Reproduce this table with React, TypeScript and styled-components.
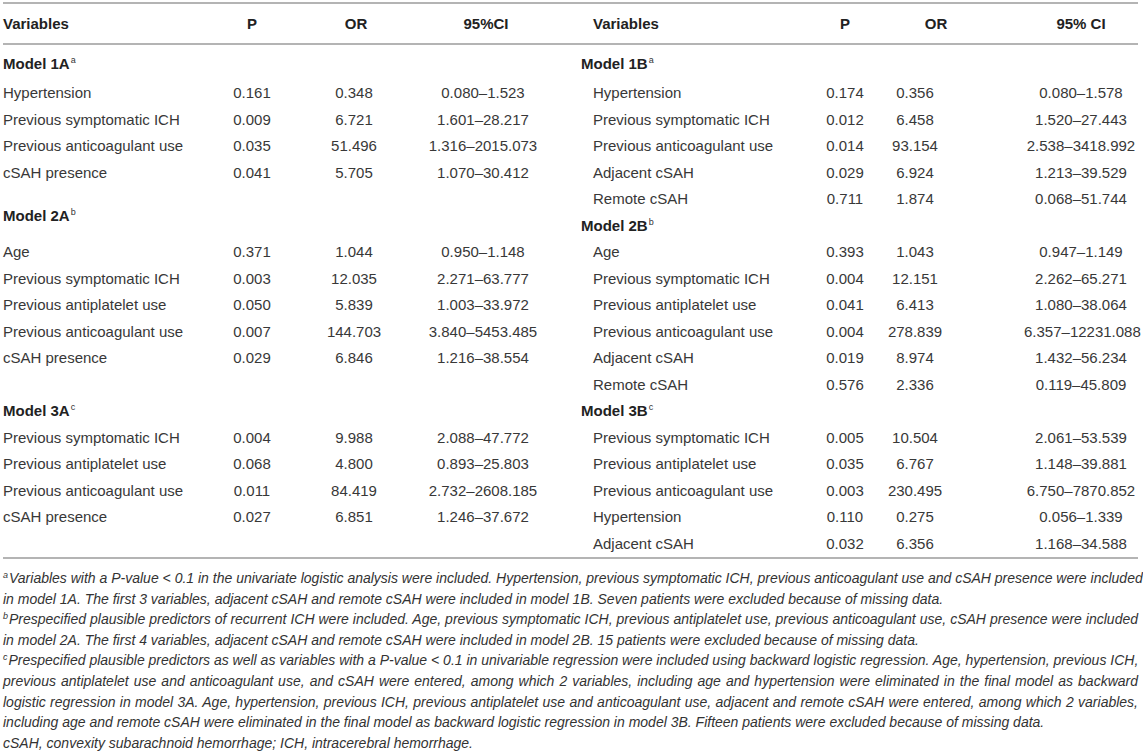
import React from 'react';
import styled, { createGlobalStyle } from 'styled-components';

type Side = 'left' | 'right';

type ModelItem = { kind: 'model'; label: string; sup: string; before?: number; after?: number };
type DataItem = { kind: 'row'; name: string; p: string; or: string; ci: string };
type Item = ModelItem | DataItem;

const COLS: Record<Side, string> = {
  left: '197px 104px 100px 158px',
  right: '248px 70px 144px 114px',
};

const row = (name: string, p: string, or: string, ci: string): DataItem => ({ kind: 'row', name, p, or, ci });

const leftItems: Item[] = [
  { kind: 'model', label: 'Model 1A', sup: 'a', before: 6, after: 2.5 },
  row('Hypertension', '0.161', '0.348', '0.080–1.523'),
  row('Previous symptomatic ICH', '0.009', '6.721', '1.601–28.217'),
  row('Previous anticoagulant use', '0.035', '51.496', '1.316–2015.073'),
  row('cSAH presence', '0.041', '5.705', '1.070–30.412'),
  { kind: 'model', label: 'Model 2A', sup: 'b', before: 16.75, after: 9.75 },
  row('Age', '0.371', '1.044', '0.950–1.148'),
  row('Previous symptomatic ICH', '0.003', '12.035', '2.271–63.777'),
  row('Previous antiplatelet use', '0.050', '5.839', '1.003–33.972'),
  row('Previous anticoagulant use', '0.007', '144.703', '3.840–5453.485'),
  row('cSAH presence', '0.029', '6.846', '1.216–38.554'),
  { kind: 'model', label: 'Model 3A', sup: 'c', before: 26.5 },
  row('Previous symptomatic ICH', '0.004', '9.988', '2.088–47.772'),
  row('Previous antiplatelet use', '0.068', '4.800', '0.893–25.803'),
  row('Previous anticoagulant use', '0.011', '84.419', '2.732–2608.185'),
  row('cSAH presence', '0.027', '6.851', '1.246–37.672'),
];

const rightItems: Item[] = [
  { kind: 'model', label: 'Model 1B', sup: 'a', before: 6, after: 2.5 },
  row('Hypertension', '0.174', '0.356', '0.080–1.578'),
  row('Previous symptomatic ICH', '0.012', '6.458', '1.520–27.443'),
  row('Previous anticoagulant use', '0.014', '93.154', '2.538–3418.992'),
  row('Adjacent cSAH', '0.029', '6.924', '1.213–39.529'),
  row('Remote cSAH', '0.711', '1.874', '0.068–51.744'),
  { kind: 'model', label: 'Model 2B', sup: 'b' },
  row('Age', '0.393', '1.043', '0.947–1.149'),
  row('Previous symptomatic ICH', '0.004', '12.151', '2.262–65.271'),
  row('Previous antiplatelet use', '0.041', '6.413', '1.080–38.064'),
  row('Previous anticoagulant use', '0.004', '278.839', '6.357–12231.088'),
  row('Adjacent cSAH', '0.019', '8.974', '1.432–56.234'),
  row('Remote cSAH', '0.576', '2.336', '0.119–45.809'),
  { kind: 'model', label: 'Model 3B', sup: 'c' },
  row('Previous symptomatic ICH', '0.005', '10.504', '2.061–53.539'),
  row('Previous antiplatelet use', '0.035', '6.767', '1.148–39.881'),
  row('Previous anticoagulant use', '0.003', '230.495', '6.750–7870.852'),
  row('Hypertension', '0.110', '0.275', '0.056–1.339'),
  row('Adjacent cSAH', '0.032', '6.356', '1.168–34.588'),
];

const App: React.FC = () => {
  const renderHalf = (side: Side, items: Item[]) => (
    <Half>
      {items.map((it, i) =>
        it.kind === 'model' ? (
          <ModelRow key={i} $side={side} $before={it.before ?? 0} $after={it.after ?? 0}>
            {it.label}
            <Sup>{it.sup}</Sup>
          </ModelRow>
        ) : (
          <Row key={i} $side={side}>
            <NameCell $indent={side === 'right' ? 31 : 0}>{it.name}</NameCell>
            <NumCell>{it.p}</NumCell>
            <NumCell $padR={side === 'right' ? 74 : 0}>{it.or}</NumCell>
            <NumCell>{it.ci}</NumCell>
          </Row>
        ),
      )}
    </Half>
  );

  return (
    <Page>
      <GlobalStyle />
      <Table>
        <Header>
          <HeadRow $side="left">
            <NameCell $indent={0}>Variables</NameCell>
            <NumCell>P</NumCell>
            <NumCell $padL={4}>OR</NumCell>
            <NumCell $padL={6}>95%CI</NumCell>
          </HeadRow>
          <HeadRow $side="right">
            <NameCell $indent={31}>Variables</NameCell>
            <NumCell>P</NumCell>
            <NumCell $padR={32}>OR</NumCell>
            <NumCell>95% CI</NumCell>
          </HeadRow>
        </Header>
        <Body>
          {renderHalf('left', leftItems)}
          {renderHalf('right', rightItems)}
        </Body>
      </Table>
      <Notes>
        <Line $full>
          <NoteMark>a</NoteMark>Variables with a P-value &lt; 0.1 in the univariate logistic analysis were included. Hypertension, previous symptomatic ICH, previous anticoagulant use and cSAH presence were included
        </Line>
        <Line>in model 1A. The first 3 variables, adjacent cSAH and remote cSAH were included in model 1B. Seven patients were excluded because of missing data.</Line>
        <Line $full>
          <NoteMark>b</NoteMark>Prespecified plausible predictors of recurrent ICH were included. Age, previous symptomatic ICH, previous antiplatelet use, previous anticoagulant use, cSAH presence were included
        </Line>
        <Line>in model 2A. The first 4 variables, adjacent cSAH and remote cSAH were included in model 2B. 15 patients were excluded because of missing data.</Line>
        <Line $full>
          <NoteMark>c</NoteMark>Prespecified plausible predictors as well as variables with a P-value &lt; 0.1 in univariable regression were included using backward logistic regression. Age, hypertension, previous ICH,
        </Line>
        <Line $full>previous antiplatelet use and anticoagulant use, and cSAH were entered, among which 2 variables, including age and hypertension were eliminated in the final model as backward</Line>
        <Line $full>logistic regression in model 3A. Age, hypertension, previous ICH, previous antiplatelet use and anticoagulant use, adjacent and remote cSAH were entered, among which 2 variables,</Line>
        <Line>including age and remote cSAH were eliminated in the final model as backward logistic regression in model 3B. Fifteen patients were excluded because of missing data.</Line>
        <Line>cSAH, convexity subarachnoid hemorrhage; ICH, intracerebral hemorrhage.</Line>
      </Notes>
    </Page>
  );
};

const GlobalStyle = createGlobalStyle`
  html, body {
    margin: 0;
    padding: 0;
    background: #ffffff;
  }
  body {
    font-family: 'Liberation Sans', Arial, Helvetica, sans-serif;
    color: #383838;
  }
`;

const Page = styled.div`
  width: 1135px;
  padding: 2px 5px 0 3px;
`;

const Table = styled.div`
  border-top: 2px solid #b4b4b4;
  border-bottom: 2px solid #b4b4b4;
`;

const Header = styled.div`
  display: flex;
  height: 39px;
  align-items: center;
  border-bottom: 2px solid #b4b4b4;
  font-weight: bold;
  color: #222;
`;

const Body = styled.div`
  display: flex;
  align-items: flex-start;
  padding-bottom: 0;
`;

const Half = styled.div`
  display: flex;
  flex-direction: column;
`;

const Row = styled.div<{ $side: Side }>`
  display: grid;
  grid-template-columns: ${p => COLS[p.$side]};
  height: 26.5px;
  line-height: 26.5px;
  font-size: 15px;
  white-space: nowrap;
`;

const HeadRow = styled(Row)`
  line-height: 20px;
  height: 20px;
`;

const ModelRow = styled.div<{ $side: Side; $before: number; $after: number }>`
  height: 26.5px;
  line-height: 26.5px;
  margin-top: ${p => p.$before}px;
  margin-bottom: ${p => p.$after}px;
  padding-left: ${p => (p.$side === 'right' ? 19 : 0)}px;
  font-size: 15px;
  font-weight: bold;
  color: #222;
  white-space: nowrap;
`;

const Sup = styled.sup`
  font-size: 9px;
  font-weight: normal;
  vertical-align: 6px;
  line-height: 0;
  margin-left: 1px;
  color: #333;
`;

const NameCell = styled.div<{ $indent: number }>`
  padding-left: ${p => p.$indent}px;
  overflow: visible;
`;

const NumCell = styled.div<{ $padR?: number; $padL?: number }>`
  text-align: center;
  padding-right: ${p => p.$padR ?? 0}px;
  padding-left: ${p => p.$padL ?? 0}px;
`;

const Notes = styled.div`
  padding-top: 9px;
  font-size: 14px;
  font-style: italic;
  line-height: 20.6px;
  color: #333;
`;

const Line = styled.div<{ $full?: boolean }>`
  white-space: nowrap;
  text-align: ${p => (p.$full ? 'justify' : 'left')};
  text-align-last: ${p => (p.$full ? 'justify' : 'left')};
`;

const NoteMark = styled.sup`
  font-size: 9px;
  vertical-align: 5px;
  line-height: 0;
  margin-right: 1px;
`;

export default App;
